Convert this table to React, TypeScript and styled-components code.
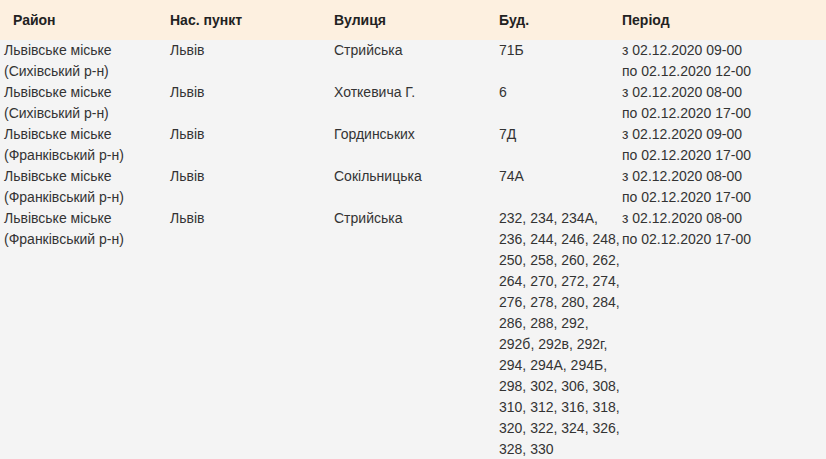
import React from 'react'
import styled, { createGlobalStyle } from 'styled-components';

const GlobalStyle = createGlobalStyle`
  html, body {
    margin: 0;
    padding: 0;
    background-color: #f4f4f4;
  }
`;

type Outage = {
  district: string[];
  town: string;
  street: string;
  houses: string;
  from: string;
  to: string;
};

const outages: Outage[] = [
  {
    district: ['Львівське міське', '(Сихівський р-н)'],
    town: 'Львів', street: 'Стрийська', houses: '71Б',
    from: '02.12.2020 09-00', to: '02.12.2020 12-00',
  },
  {
    district: ['Львівське міське', '(Сихівський р-н)'],
    town: 'Львів', street: 'Хоткевича Г.', houses: '6',
    from: '02.12.2020 08-00', to: '02.12.2020 17-00',
  },
  {
    district: ['Львівське міське', '(Франківський р-н)'],
    town: 'Львів', street: 'Гординських', houses: '7Д',
    from: '02.12.2020 09-00', to: '02.12.2020 17-00',
  },
  {
    district: ['Львівське міське', '(Франківський р-н)'],
    town: 'Львів', street: 'Сокільницька', houses: '74А',
    from: '02.12.2020 08-00', to: '02.12.2020 17-00',
  },
  {
    district: ['Львівське міське', '(Франківський р-н)'],
    town: 'Львів', street: 'Стрийська',
    houses: '232, 234, 234А, 236, 244, 246, 248, 250, 258, 260, 262, 264, 270, 272, 274, 276, 278, 280, 284, 286, 288, 292, 292б, 292в, 292г, 294, 294А, 294Б, 298, 302, 306, 308, 310, 312, 316, 318, 320, 322, 324, 326, 328, 330',
    from: '02.12.2020 08-00', to: '02.12.2020 17-00',
  },
];

const App: React.FC = () => {
  return (
    <>
      <GlobalStyle />
      <Table>
        <colgroup>
          <col style={{ width: 170 }} />
          <col style={{ width: 164 }} />
          <col style={{ width: 165 }} />
          <col style={{ width: 123 }} />
          <col />
        </colgroup>
        <thead>
          <tr>
            <HeadCell $first>Район</HeadCell>
            <HeadCell>Нас. пункт</HeadCell>
            <HeadCell>Вулиця</HeadCell>
            <HeadCell>Буд.</HeadCell>
            <HeadCell>Період</HeadCell>
          </tr>
        </thead>
        <tbody>
          {outages.map((o, i) => (
            <tr key={i}>
              <Cell $first>
                {o.district[0]}<br />{o.district[1]}
              </Cell>
              <Cell>{o.town}</Cell>
              <Cell>{o.street}</Cell>
              <Cell>{o.houses}</Cell>
              <Cell>
                з {o.from}<br />по {o.to}
              </Cell>
            </tr>
          ))}
        </tbody>
      </Table>
    </>
  );
};

export default App;

const Table = styled.table`
  width: 100%;
  table-layout: fixed;
  border-collapse: collapse;
  font-family: 'Liberation Sans', Arial, sans-serif;
  font-size: 14px;
  color: #333;
`;

const HeadCell = styled.th<{ $first?: boolean }>`
  height: 40px;
  padding: 0 0 0 ${(p) => (p.$first ? '13px' : '0')};
  background-color: #fdf0e0;
  text-align: left;
  vertical-align: middle;
  font-weight: bold;
  color: #222;
  line-height: 21px;
`;

const Cell = styled.td<{ $first?: boolean }>`
  padding: 0 0 0 ${(p) => (p.$first ? '4px' : '0')};
  vertical-align: top;
  line-height: 21px;
  word-wrap: break-word;
`;
